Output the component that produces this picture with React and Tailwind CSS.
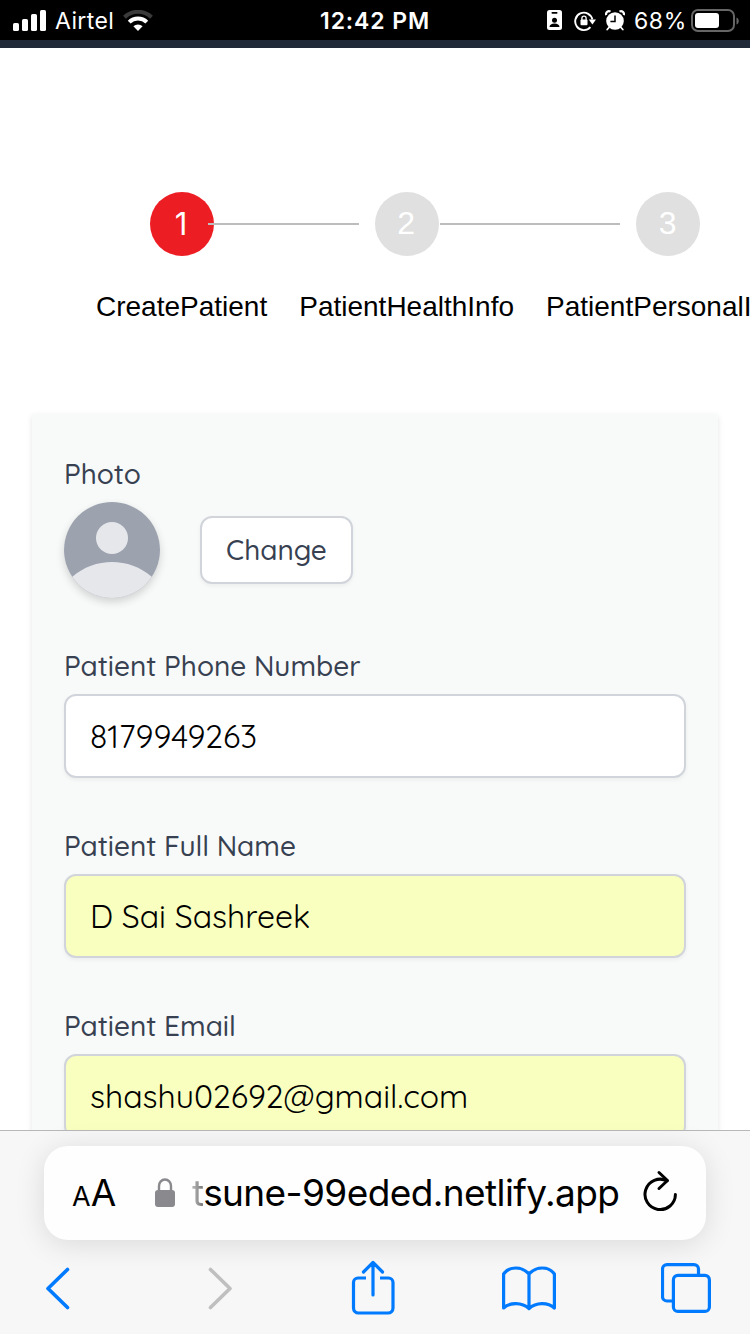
const STEPS = [
  { n: 1, label: "CreatePatient", active: true },
  { n: 2, label: "PatientHealthInfo" },
  { n: 3, label: "PatientPersonalInfo" },
];

function StatusBar() {
  return (
    <header className="grid h-10 shrink-0 grid-cols-[320px_110px_1fr] items-center bg-black font-['Inter','Liberation_Sans',sans-serif] text-[22px] leading-10 text-white">
      <div className="flex items-center pl-[13px]">
        <svg width="33" height="22" viewBox="0 0 33 22" fill="white">
          <rect x="0" y="13" width="6" height="8" rx="1.6" />
          <rect x="9" y="9" width="6" height="12" rx="1.6" />
          <rect x="18" y="4" width="6" height="17" rx="1.6" />
          <rect x="27" y="0" width="6" height="21" rx="1.6" />
        </svg>
        <span className="ml-[9px] w-[68px] whitespace-nowrap pt-px text-[23px] tracking-[0.4px]">Airtel</span>
        <svg width="30" height="22" viewBox="0 0 30 22" fill="none">
          <path d="M1.5 7.2 A19.5 19.5 0 0 1 28.5 7.2" stroke="#3a3a3a" strokeWidth="4" />
          <path d="M6.2 12.1 A12.6 12.6 0 0 1 23.8 12.1" stroke="white" strokeWidth="4" />
          <path d="M10.4 16.3 A6.6 6.6 0 0 1 19.6 16.3 L15 21 Z" fill="white" />
        </svg>
      </div>
      <span className="whitespace-nowrap pt-px text-[23px] font-semibold tracking-[0.9px]">12:42 PM</span>
      <div className="flex items-center justify-end pr-[11px]">
        <svg className="-ml-px" width="15" height="21" viewBox="0 0 15 21">
          <rect width="15" height="20" rx="2.5" fill="white" />
          <rect x="4.5" y="2" width="6" height="1.7" rx=".8" fill="black" />
          <circle cx="7.5" cy="10.2" r="2.5" fill="black" />
          <path d="M2.5 17c0-2.4 2.2-3.6 5-3.6s5 1.200 5 3.600z" fill="black" />
        </svg>
        <svg className="ml-3" width="22" height="22" viewBox="0 0 22 22" fill="none" stroke="white" strokeWidth="1.9">
          <path d="M16.400 17.200A8.700 8.700 0 1 1 18.400 9.500" />
          <path d="M14.800 9.500H22L18.400 14.500z" fill="white" stroke="none" />
          <rect x="6.500" y="9.500" width="7" height="5.800" rx="1" fill="white" stroke="none" />
          <path d="M7.900 10V8.300a2.100 2.100 0 0 1 4.200 0V10" strokeWidth="1.300" />
        </svg>
        <svg className="ml-[9px]" width="20" height="22" viewBox="0 0 20 22">
          <circle cx="10" cy="11" r="8.800" fill="white" />
          <path d="M4 17.500l-1.800 2M16 17.500l1.800 2" stroke="white" strokeWidth="1.800" strokeLinecap="round" />
          <path d="M1.200 5.200A3 3 0 0 1 5.500 1.600M18.800 5.200A3 3 0 0 0 14.500 1.600" stroke="white" strokeWidth="2.200" fill="none" />
          <path d="M10 5.500V11.500H5.400" stroke="black" strokeWidth="1.500" fill="none" />
        </svg>
        <span className="ml-[9px] w-[57px] whitespace-nowrap pt-px text-[23px] tracking-[0.6px]">68%</span>
        <svg width="48" height="24" viewBox="0 0 48 24">
          <rect x="1" y="1" width="42" height="21" rx="6" fill="none" stroke="#666" strokeWidth="2" />
          <rect x="4" y="4" width="24" height="15" rx="3" fill="white" />
          <path d="M45.500 8.500c3 1 3 6 0 7z" fill="#666" />
        </svg>
      </div>
    </header>
  );
}

function Stepper() {
  return (
    <ol className="flex w-max px-20 font-['Liberation_Sans',Arial,sans-serif]">
      {STEPS.map((s) => (
        <li key={s.n} className="flex flex-col items-center px-4">
          <div className="relative">
            <div className={s.active ? "flex h-16 w-16 items-center justify-center rounded-full bg-[#ed1d24] pb-0.5 pr-px font-['Inter'] text-[31px] leading-none text-white" : "flex h-16 w-16 items-center justify-center rounded-full bg-[#e0e0e0] pb-0.5 pr-px text-[32px] leading-none text-white"}>{s.n}</div>
            {s.n === 1 && <div className="absolute left-[58px] top-[31px] h-0.5 w-[151px] bg-[#bdbdbd]" />}
            {s.n === 2 && <div className="absolute left-[65px] top-[31px] h-0.5 w-[180px] bg-[#bdbdbd]" />}
          </div>
          <span className="mt-8 whitespace-nowrap text-[28px] leading-[38px] text-black">{s.label}</span>
        </li>
      ))}
    </ol>
  );
}

function Field({ label, value, filled }) {
  return (
    <label className="mt-12 block">
      <span className="block h-10 whitespace-nowrap text-[28px] font-medium leading-10 tracking-[-0.04px] text-[#374151]">{label}</span>
      <span className={"mt-2 flex h-[84px] items-center whitespace-nowrap rounded-xl border-2 border-[#d1d5db] px-6 text-[32px] text-black shadow-[0_2px_4px_rgba(0,0,0,0.05)] " + (filled ? "bg-[#f9ffbe]" : "bg-white")}>
        {value}
      </span>
    </label>
  );
}

function PatientForm() {
  return (
    <section className="mx-8 mt-[88px] h-[900px] bg-[#f8faf9] px-8 pt-10 font-['Quicksand','Lato',sans-serif] shadow-[0_2px_6px_rgba(0,0,0,0.10)]">
      <div className="h-10 text-[28px] font-medium leading-10 tracking-[-0.04px] text-[#374151]">Photo</div>
      <div className="mt-2 flex h-24 items-center">
        <svg className="h-24 w-24 rounded-full shadow-[0_4px_8px_rgba(0,0,0,0.16)]" viewBox="0 0 96 96">
          <rect width="96" height="96" fill="#9ca3af" />
          <circle cx="48" cy="36" r="16" fill="#e5e7eb" />
          <path d="M8 75C31 55 65 55 88 75V96H8Z" fill="#e5e7eb" />
        </svg>
        <button className="ml-10 h-[68px] w-[153px] rounded-xl border-2 border-[#d1d5db] bg-white text-[28px] font-medium text-[#374151] shadow-[0_2px_4px_rgba(0,0,0,0.05)]">Change</button>
      </div>
      <Field label="Patient Phone Number" value="8179949263" />
      <Field label="Patient Full Name" value="D Sai Sashreek" filled />
      <Field label="Patient Email" value="shashu02692@gmail.com" filled />
    </section>
  );
}

function BrowserBar() {
  return (
    <footer className="h-[204px] shrink-0 border-t border-[#b8b8b8] bg-[#f7f7f7] px-[38px] pt-[15px]">
      <div className="mx-1.5 flex h-[94px] items-center rounded-[24px] bg-[#fefefe] pl-7 font-['Inter','Liberation_Sans',sans-serif] text-black shadow-[0_4px_30px_rgba(0,0,0,0.12)]">
        <div className="flex w-[83px] items-baseline">
          <span className="text-[27px]">A</span>
          <span className="text-[37px]">A</span>
        </div>
        <svg className="shrink-0" width="20" height="30" viewBox="0 0 20 30" fill="none">
          <rect y="12" width="20" height="17" rx="3" fill="#8a8a8e" />
          <path d="M4 13V8a6 6.500 0 0 1 12 0v5" stroke="#8a8a8e" strokeWidth="2.400" />
        </svg>
        <span className="ml-[17px] w-[450px] shrink-0 whitespace-nowrap text-[37px] tracking-[-0.6px]">
          <span className="bg-gradient-to-r from-[#bbb] to-[#777] bg-clip-text text-transparent">t</span>sune-99eded.netlify.app
        </span>
        <svg className="mb-1 shrink-0" width="36" height="42" viewBox="0 0 36 42" fill="none" stroke="black" strokeWidth="3" strokeLinecap="round" strokeLinejoin="round">
          <path d="M33.400 24.500A15.200 15.200 0 1 1 25 10.800" />
          <path d="M17 2.500L25.500 10.500L17 18.500" />
        </svg>
      </div>
      <nav className="mt-[17px] flex h-[62px] items-center text-[#007aff]">
        <svg className="ml-1.5 shrink-0" width="28" height="44" viewBox="0 0 28 44" fill="none" stroke="currentColor" strokeWidth="3.600" strokeLinecap="round" strokeLinejoin="round">
          <path d="M23.500 3.500L4 22.500L23.500 41.500" />
        </svg>
        <svg className="ml-[134px] shrink-0" width="28" height="44" viewBox="0 0 28 44" fill="none" stroke="#bfbfbf" strokeWidth="3.600" strokeLinecap="round" strokeLinejoin="round">
          <path d="M4.500 3.500L24 22.500L4.500 41.500" />
        </svg>
        <svg className="ml-[117px] shrink-0" width="44" height="56" viewBox="0 0 44 56" fill="none" stroke="currentColor" strokeWidth="3.200" strokeLinecap="round" strokeLinejoin="round">
          <path d="M15 18H7a4.500 4.500 0 0 0-4.500 4.500V48a5 5 0 0 0 5 5H37a5 5 0 0 0 5-5V22.500a4.500 4.500 0 0 0-4.500-4.500H29" strokeLinecap="butt" />
          <path d="M22 35V3M12.500 12L22 2.500L31.500 12" />
        </svg>
        <svg className="ml-[107px] shrink-0" width="54" height="46" viewBox="0 0 54 46" fill="none" stroke="currentColor" strokeWidth="3.200" strokeLinejoin="round">
          <path d="M27 9C20 1 7 1 1.600 9V43C8 37 20 37 27 43.500C34 37 46 37 52.400 43V9C47 1 34 1 27 9V43.500" />
        </svg>
        <svg className="ml-[105px] shrink-0" width="50" height="50" viewBox="0 0 50 50" fill="none" stroke="currentColor" strokeWidth="3.200">
          <path d="M12 38H6a4.500 4.500 0 0 1-4.500-4.500V6A4.500 4.500 0 0 1 6 1.600H33A4.500 4.500 0 0 1 37.500 6V12" />
          <rect x="12.400" y="12.400" width="36" height="36" rx="4.500" />
        </svg>
      </nav>
    </footer>
  );
}

export default function App() {
  return (
    <div className="flex h-[1334px] w-[750px] flex-col overflow-hidden bg-white">
      <StatusBar />
      <div className="h-2 shrink-0 bg-[#1f2937]" />
      <main className="min-h-0 flex-1 overflow-hidden pt-36">
        <Stepper />
        <PatientForm />
      </main>
      <BrowserBar />
    </div>
  );
}
